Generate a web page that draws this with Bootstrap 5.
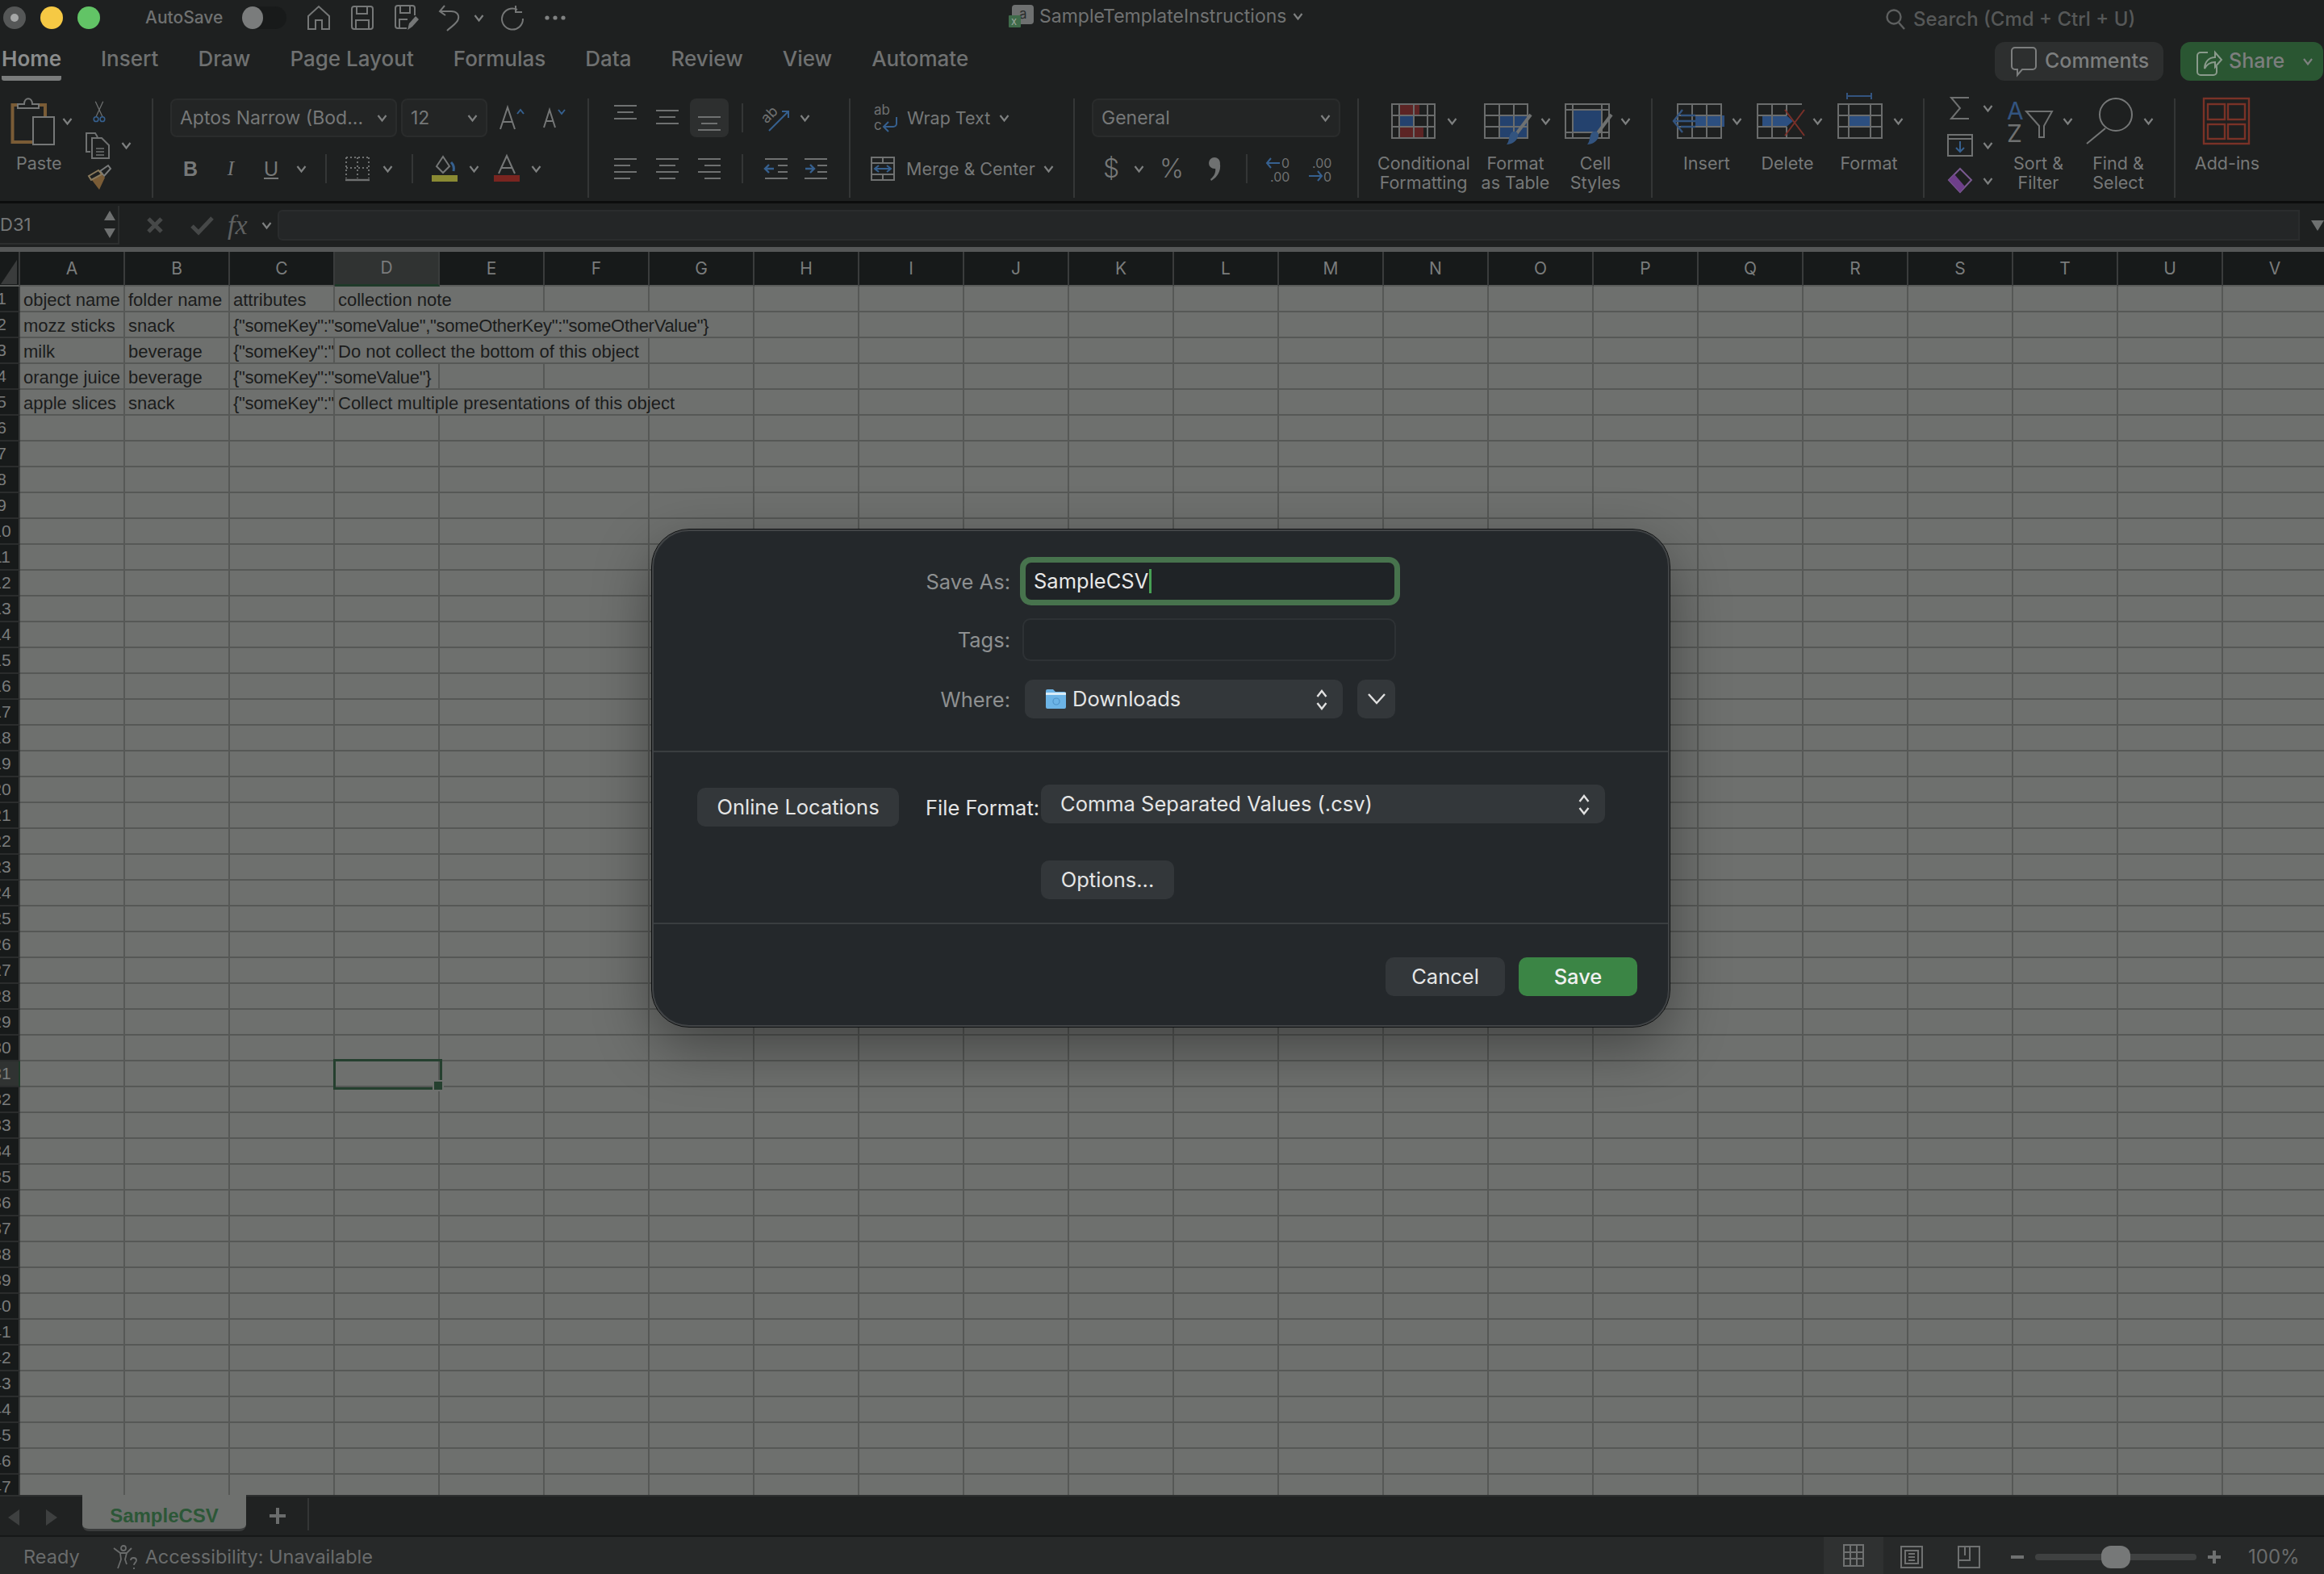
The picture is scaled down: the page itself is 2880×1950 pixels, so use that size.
<!DOCTYPE html>
<html lang="en">
<head>
<meta charset="UTF-8">
<title>SampleTemplateInstructions</title>
<link href="https://cdn.jsdelivr.net/npm/bootstrap@5.3.0/dist/css/bootstrap.min.css" rel="stylesheet">
<style>
    html, body { height: 100%; overflow: hidden; }
    body { background: #1e2020; font-family: Inter, "Noto Sans", sans-serif; color: #767878; font-size: 22px; }
    svg { display: block; flex: none; overflow: visible; }
    .xl-window { position: relative; width: 2880px; height: 1950px; display: flex; flex-direction: column; overflow: hidden; }

    /* small margin helpers, bootstrap spacing scale is too coarse here */
    .l2 { margin-left: 2px; } .l5 { margin-left: 5px; } .l9 { margin-left: 9px; } .l10 { margin-left: 10px; } .l11 { margin-left: 11px; } .l12 { margin-left: 12px; }
    .l13 { margin-left: 13px; } .l14 { margin-left: 14px; } .l15 { margin-left: 15px; } .l16 { margin-left: 16px; } .l18 { margin-left: 18px; }
    .l20 { margin-left: 20px; } .l21 { margin-left: 21px; } .l22 { margin-left: 22px; } .l23 { margin-left: 23px; } .l24 { margin-left: 24px; }
    .l25 { margin-left: 25px; } .l26 { margin-left: 26px; } .l27 { margin-left: 27px; } .l29 { margin-left: 29px; } .l34 { margin-left: 34px; } .l38 { margin-left: 38px; } .l43 { margin-left: 43px; }

    /* title bar */
    .title-bar { height: 44px; flex: none; display: flex; align-items: center; position: relative; padding-left: 4px; }
    .light { width: 28px; height: 28px; border-radius: 50%; margin-right: 18px; flex: none; }
    .light-grey { background: #555757; display: flex; align-items: center; justify-content: center; }
    .light-grey::after { content: ""; width: 10px; height: 10px; border-radius: 50%; background: #a5a7a7; }
    .light-yellow { background: #f6c944; }
    .light-green { background: #62c466; }
    .autosave { margin-left: 38px; width: 120px; font-size: 21px; font-weight: 500; color: #6f7171; }
    .toggle-pill { width: 55px; height: 28px; border-radius: 14px; background: #181a1a; flex: none; }
    .toggle-pill::before { content: ""; display: block; width: 26px; height: 28px; border-radius: 50%; background: #7a7c7c; }
    .doc-title { position: absolute; left: 1250px; top: 0; height: 40px; display: flex; align-items: center; gap: 7px; font-size: 23px; color: #707272; }
    .search-hint { position: absolute; left: 2337px; top: 6px; height: 36px; display: flex; align-items: center; gap: 9px; font-size: 24px; font-weight: 500; color: #565858; }

    /* tab row */
    .tab-row { height: 66px; flex: none; display: flex; align-items: flex-start; justify-content: space-between; padding: 8px 1px 0 2px; }
    .xl-tabs { gap: 49px; flex-wrap: nowrap; }
    .xl-tabs .nav-link { padding: 0; height: 42px; line-height: 42px; font-size: 26px; font-weight: 500; color: #6f7171; }
    .xl-tabs .nav-link.active { color: #8a8c8c; font-weight: 600; border-bottom: 6px solid #7a7c7c; height: 48px; border-radius: 3px; }
    .top-btn { height: 48px; border-radius: 12px; display: flex; align-items: center; font-size: 25px; font-weight: 500; color: #7c7e7e; border: 0; padding: 0; }
    .btn-comments { width: 209px; background: #2d2f2f; gap: 10px; padding-left: 20px; margin-right: 21px; }
    .btn-share { width: 177px; background: #2a5632; gap: 8px; padding-left: 20px; }

    /* ribbon */
    .ribbon { height: 142px; flex: none; display: flex; padding-top: 12px; border-bottom: 3px solid #0c0d0d; }
    .rb-group { height: 123px; flex: none; border-right: 2px solid #343636; box-sizing: border-box; }
    .g-clip { width: 190px; display: flex; padding-left: 14px; }
    .g-font { width: 540px; padding-left: 21px; }
    .g-align { width: 324px; padding-left: 31px; }
    .g-wrap { width: 278px; padding-left: 25px; }
    .g-num { width: 352px; padding-left: 21px; }
    .g-styles { width: 364px; padding-left: 23px; display: flex; }
    .g-cells { width: 337px; padding-left: 17px; display: flex; }
    .g-edit { width: 311px; padding-left: 28px; display: flex; }
    .g-add { width: 185px; padding-left: 20px; border-right: 0; display: flex; }
    .rb-row1 { height: 48px; display: flex; align-items: center; }
    .rb-row2 { height: 44px; margin-top: 17px; display: flex; align-items: center; }
    .rb-sep { width: 2px; height: 36px; background: #343636; flex: none; }
    .rb-box { height: 48px; border-radius: 8px; background: #232525; border: 2px solid #2a2c2c; display: flex; align-items: center; justify-content: space-between; padding: 0 10px 0 10px; font-size: 23px; color: #767878; box-sizing: border-box; flex: none; }
    .box-fontname { width: 281px; white-space: nowrap; }
    .box-size { width: 107px; }
    .box-general { width: 308px; }
    .align-top-a { align-self: flex-start; margin-top: 8px; }
    .align-top-b { align-self: flex-start; margin-top: 14px; }
    .align-on { width: 48px; height: 48px; border-radius: 8px; background: #2d2f2f; display: flex; justify-content: center; padding-top: 22px; flex: none; }
    .fmt-b, .fmt-i, .fmt-u { display: block; width: 14px; font-size: 25px; line-height: 30px; color: #767878; font-family: "Liberation Sans", sans-serif; text-align: center; flex: none; }
    .fmt-b { font-weight: 700; }
    .fmt-i { font-family: "Liberation Serif", serif; font-style: italic; }
    .fmt-u { width: 18px; text-decoration: underline; }
    .num-dollar { width: 18px; font-size: 32px; font-weight: 300; line-height: 36px; text-align: center; flex: none; }
    .num-pct { width: 32px; font-size: 32px; font-weight: 300; line-height: 36px; text-align: center; flex: none; }
    .rb-big { display: flex; flex-direction: column; flex: none; }
    .rb-big-top { height: 68px; padding-bottom: 12px; box-sizing: border-box; display: flex; align-items: center; }
    .rb-label { font-size: 21.5px; line-height: 24px; text-align: center; color: #767878; white-space: nowrap; }
    .w-cond { width: 114px; } .w-table { width: 114px; } .w-cell { width: 84px; }
    .w-ins { width: 100px; } .w-del { width: 100px; } .w-fmt { width: 102px; }
    .w-sort { width: 90px; } .w-find { width: 108px; } .w-add { width: 88px; } .w-paste { width: 90px; }
    .pl4 { padding-left: 4px; } .pl6 { padding-left: 6px; } .pl8 { padding-left: 8px; } .pl12 { padding-left: 12px; }
    .pl14 { padding-left: 14px; } .pl17 { padding-left: 17px; } .pl18 { padding-left: 18px; }
    .clip-side { width: 70px; margin-left: 2px; position: relative; }
    .clip-row { display: flex; align-items: center; }
    .edit-col { width: 68px; flex: none; display: flex; flex-direction: column; }
    .edit-a { height: 32px; margin-top: -4px; } .edit-b { height: 28px; margin-top: 16px; } .edit-c { height: 30px; margin-top: 15px; }

    /* formula bar */
    .formula-bar { height: 54px; flex: none; display: flex; align-items: center; }
    .name-box { width: 148px; height: 48px; flex: none; border-right: 2px solid #2c2e2e; border-bottom: 2px solid #2c2e2e; display: flex; align-items: center; justify-content: space-between; padding: 0 2px 0 0; font-size: 22px; color: #767878; }
    .fx-text { font-family: "Liberation Serif", serif; font-style: italic; font-size: 34px; color: #5e6060; width: 32px; line-height: 34px; flex: none; }
    .formula-input { flex: 1 1 auto; height: 38px; background: #242627; border: 2px solid #2a2c2d; border-radius: 6px 0 0 6px; margin-left: 7px; }
    .formula-end { width: 30px; height: 38px; flex: none; display: flex; align-items: center; justify-content: flex-end; background: #1e2020; }

    /* sheet */
    .sheet-top-line { height: 6px; flex: none; background: #555757; }
    .sheet { flex: 1 1 auto; min-height: 0; overflow: hidden; background: #6e706e; }
    .xl-grid { border-collapse: separate; border-spacing: 0; table-layout: fixed; width: 2885px; font-family: "Liberation Sans", sans-serif; font-size: 22px; color: #1b1c1c; }
    .xl-grid th, .xl-grid td { padding: 0; box-sizing: border-box; white-space: nowrap; overflow: hidden; }
    .xl-grid col.col-row { width: 25px; }
    .xl-grid col.col-cell { width: 130px; }
    .xl-grid thead th { height: 43px; background: #171a1a; color: #7a7c7c; font-weight: 400; text-align: center; border-right: 2px solid #3a3c3c; border-bottom: 2px solid #5a5c5a; font-family: Inter, sans-serif; font-size: 21px; }
    .xl-grid thead th.head-on { background: #303332; border-bottom: 3px solid #1f3a29; }
    .xl-grid tbody th { height: 32px; background: #171a1a; color: #7a7c7c; font-weight: 400; border-right: 2px solid #3a3c3c; border-bottom: 2px solid #2a2c2c; overflow: hidden; }
    .xl-grid tbody th.head-on { background: #303332; border-right: 2px solid #1f3a29; }
    .row-num { display: block; width: 46px; margin-left: -21px; text-align: center; font-size: 21px; line-height: 30px; }
    .xl-grid td { height: 32px; border-right: 2px solid #565856; border-bottom: 2px solid #565856; padding: 3px 0 0 4px; line-height: 27px; vertical-align: bottom; }
    .json-cell { letter-spacing: -.3px; }
    .xl-grid td.cur-cell { overflow: visible; position: relative; }
    .cur-cell::after { content: ""; position: absolute; left: -2px; top: -3px; width: 135px; height: 38px; border: 3px solid #25402f; }
    .cur-cell::before { content: ""; position: absolute; right: -5px; bottom: -5px; width: 10px; height: 10px; background: #25402f; outline: 2px solid #6e706e; z-index: 1; }
    .corner-mark { width: 0; height: 0; border-style: solid; border-width: 0 0 30px 20px; border-color: transparent transparent #3a3c3c transparent; margin: 8px 0 0 1px; }

    /* sheet tabs + status */
    .sheet-tabs { height: 52px; flex: none; background: #202222; border-top: 2px solid #2d2f2f; border-bottom: 2px solid #161818; display: flex; align-items: flex-start; box-sizing: border-box; }
    .tab-nav { width: 102px; flex: none; display: flex; gap: 31px; padding: 16px 0 0 9px; }
    .sheet-tab { width: 203px; height: 45px; flex: none; margin-top: -2px; background: #6e706e; border-bottom: 3px solid #3a3c3c; border-radius: 0 0 8px 8px; text-align: center; font-family: "Liberation Sans", sans-serif; font-size: 24px; font-weight: 700; line-height: 52px; color: #2c5737; }
    .tab-plus { margin: 14px 0 0 29px; }
    .tab-sep { width: 2px; height: 40px; margin: 2px 0 0 27px; background: #343636; }
    .status-bar { height: 46px; flex: none; background: #272929; display: flex; align-items: center; padding: 3px 0 0 29px; font-size: 23.5px; color: #6a6c6c; position: relative; }
    .status-acc { display: flex; align-items: center; gap: 10px; margin-left: 41px; }
    .status-right { position: absolute; left: 2260px; top: 0; height: 46px; padding-top: 4px; display: flex; align-items: center; font-size: 24px; }
    .view-on { width: 74px; height: 46px; margin-top: -4px; background: #2f3131; display: flex; align-items: center; justify-content: center; flex: none; }
    .zoom-track { width: 200px; height: 8px; border-radius: 4px; background: #3f4141; position: relative; flex: none; margin-left: 14px; }
    .zoom-thumb { position: absolute; left: 82px; top: -10px; width: 36px; height: 28px; border-radius: 12px; background: #767878; }
    .zoom-pct { margin-left: 34px; }

    /* save sheet */
    .save-sheet { position: absolute; left: 808px; top: 656px; width: 1261px; height: 616px; background: #24282b; border-radius: 46px; border: 2px solid #414446; outline: 1px solid #0e1011; box-shadow: 0 24px 70px rgba(0,0,0,.4); padding-top: 32px; font-size: 25.5px; }
    .dlg-form { display: grid; grid-template-columns: 442px 1fr; column-gap: 12px; align-items: center; }
    .dlg-label { text-align: right; color: #8e9091; white-space: nowrap; padding-top: 2px; }
    .save-name { width: 471px; height: 60px; border: 7px solid #47734d; border-radius: 14px; background: #1f2326; display: flex; align-items: center; padding-left: 10px; color: #e8e8e8; }
    .caret-bar { width: 3px; height: 30px; background: #47a054; margin-left: 1px; }
    .tags-box { width: 463px; height: 53px; margin: 16px 0 0 3px; border: 2px solid #2e3235; border-radius: 10px; background: #222629; }
    .dlg-tags-label { margin-top: 16px; }
    .where-row { display: flex; gap: 18px; margin: 23px 0 0 6px; }
    .dlg-where-label { margin-top: 23px; }
    .dlg-btn { height: 48px; border-radius: 10px; border: 0; background: #33373a; color: #e4e5e5; font-size: 25.5px; line-height: 48px; padding: 0; display: flex; align-items: center; justify-content: center; flex: none; }
    .dlg-btn:hover { background: #33373a; color: #e4e5e5; }
    .where-pop { width: 394px; justify-content: flex-start; padding-left: 25px; gap: 7px; position: relative; }
    .pop-arrows { position: absolute; right: 18px; top: 11px; }
    .where-more { width: 47px; }
    .dlg-rule { height: 2px; background: #3a3e40; border: 0; opacity: 1; margin: 0; }
    .rule-a { margin-top: 40px; }
    .format-row { display: flex; padding: 40px 0 0 54px; }
    .online-btn { width: 250px; margin-top: 4px; }
    .format-label { margin: 4px 0 0 33px; width: 143px; line-height: 50px; white-space: nowrap; color: #e4e5e5; }
    .format-pop { width: 699px; justify-content: flex-start; padding-left: 24px; position: relative; }
    .options-row { padding: 40px 0 29px 480px; }
    .options-btn { width: 165px; }
    .action-row { display: flex; justify-content: flex-end; gap: 17px; padding: 41px 38px 0 0; }
    .cancel-btn { width: 148px; }
    .save-btn { width: 147px; background: #3b8545; color: #f0f0f0; font-weight: 500; }
    .save-btn:hover { background: #3b8545; color: #f0f0f0; }
</style>
</head>
<body>

<svg width="0" height="0" class="position-absolute">
    <symbol id="chev" viewBox="0 0 13 12"><polyline points="1.5,3 6.5,9.5 11.5,3" fill="none" stroke="#7e8080" stroke-width="2.2"/></symbol>
    <symbol id="updown" viewBox="0 0 16 28"><polyline points="2.5,10 8,3 13.5,10" fill="none" stroke="#e0e0e0" stroke-width="2.4"/><polyline points="2.5,18 8,25 13.5,18" fill="none" stroke="#e0e0e0" stroke-width="2.4"/></symbol>
</svg>

<div class="xl-window">

    <!-- title bar -->
    <div class="title-bar">
        <span class="light light-grey"></span><span class="light light-yellow"></span><span class="light light-green"></span>
        <span class="autosave">AutoSave</span>
        <span class="toggle-pill"></span>
        <svg class="l26" width="28" height="30" viewBox="0 0 28 30" fill="none" stroke="#757777" stroke-width="2"><path d="M1 13 14 1l13 12v16H18V18h-8v11H1z"/></svg>
        <svg class="l26" width="28" height="30" viewBox="0 0 28 30" fill="none" stroke="#757777" stroke-width="2"><rect x="1" y="1" width="26" height="28" rx="3"/><path d="M7 1v9h13V1M6 29V18h16v11"/></svg>
        <svg class="l26" width="30" height="32" viewBox="0 0 30 32" fill="none" stroke="#757777" stroke-width="2"><path d="M15 29H4a3 3 0 0 1-3-3V4a3 3 0 0 1 3-3h18a3 3 0 0 1 3 3v9"/><path d="M7 1v9h12V1M6 29V18h10"/><path d="M16 31l2-8 8-9 4 4-8 9z" fill="#757777" stroke="none"/></svg>
        <svg class="l24" width="28" height="32" viewBox="0 0 28 32" fill="none" stroke="#757777" stroke-width="2"><path d="M8 1 2 8l7 5M2 8h14c7 0 10 4 9 9-1 6-8 9-14 15"/></svg>
        <svg class="l16" width="13" height="12"><use href="#chev"/></svg>
        <svg class="l21" width="28" height="30" viewBox="0 0 28 30" fill="none" stroke="#757777" stroke-width="2"><path d="M20 5A13 13 0 1 0 27 16"/><path d="M18 0v8h8"/></svg>
        <svg class="l26" width="26" height="6" viewBox="0 0 26 6" fill="#808282"><circle cx="3" cy="3" r="2.6"/><circle cx="13" cy="3" r="2.6"/><circle cx="23" cy="3" r="2.6"/></svg>

        <div class="doc-title">
            <svg width="31" height="28" viewBox="0 0 31 28"><rect x="4" y="0" width="27" height="24" rx="4" fill="#6e7070"/><text x="13" y="17" font-family="Inter" font-size="17" fill="#2a2c2c">a</text><rect x="0" y="13" width="15" height="15" rx="1" fill="#3f6b4a"/><text x="3" y="25" font-family="Inter" font-size="13" fill="#9aa59c">x</text></svg>
            <span>SampleTemplateInstructions</span>
            <svg width="15" height="12"><use href="#chev"/></svg>
        </div>
        <div class="search-hint">
            <svg width="25" height="26" viewBox="0 0 25 26" fill="none" stroke="#5e6060" stroke-width="2.4"><circle cx="10" cy="10" r="8.5"/><path d="M16 17l7 8"/></svg>
            <span>Search (Cmd + Ctrl + U)</span>
        </div>
    </div>

    <!-- tabs -->
    <div class="tab-row">
        <ul class="nav xl-tabs">
            <li class="nav-item"><a class="nav-link active" href="#">Home</a></li>
            <li class="nav-item"><a class="nav-link" href="#">Insert</a></li>
            <li class="nav-item"><a class="nav-link" href="#">Draw</a></li>
            <li class="nav-item"><a class="nav-link" href="#">Page Layout</a></li>
            <li class="nav-item"><a class="nav-link" href="#">Formulas</a></li>
            <li class="nav-item"><a class="nav-link" href="#">Data</a></li>
            <li class="nav-item"><a class="nav-link" href="#">Review</a></li>
            <li class="nav-item"><a class="nav-link" href="#">View</a></li>
            <li class="nav-item"><a class="nav-link" href="#">Automate</a></li>
        </ul>
        <div class="d-flex">
            <button class="btn top-btn btn-comments">
                <svg width="32" height="36" viewBox="0 0 32 36" fill="none" stroke="#7c7e7e" stroke-width="2"><path d="M5 1h22a4 4 0 0 1 4 4v19a4 4 0 0 1-4 4H14l-6 7v-7H5a4 4 0 0 1-4-4V5a4 4 0 0 1 4-4z"/></svg>
                <span>Comments</span>
            </button>
            <button class="btn top-btn btn-share">
                <svg width="32" height="36" viewBox="0 0 32 36" fill="none" stroke="#8a9a8c" stroke-width="2"><path d="M14 7H5a4 4 0 0 0-4 4v20a4 4 0 0 0 4 4h16a4 4 0 0 0 4-4v-7"/><path d="M10 27c0-9 6-14 13-14V7l8 9-8 9v-6c-6 0-10 2-13 8z"/></svg>
                <span>Share</span>
                <svg class="l14" width="14" height="12"><use href="#chev"/></svg>
            </button>
        </div>
    </div>

    <!-- ribbon -->
    <div class="ribbon">
        <!-- clipboard -->
        <div class="rb-group g-clip">
            <div class="rb-big w-paste">
                <div class="rb-big-top">
                    <svg width="54" height="60" viewBox="0 0 54 60" fill="none"><path d="M8 10H1.5v46H26" stroke="#7a5c36" stroke-width="4"/><path d="M34 10h8v14" stroke="#7a5c36" stroke-width="4"/><path d="M8 14V9h8c0-9 10-9 10 0h8v5z" stroke="#757777" stroke-width="2" fill="#1e2020"/><rect x="27" y="25" width="26" height="34" stroke="#757777" stroke-width="2" fill="#1e2020"/></svg>
                    <svg class="l9" width="13" height="12"><use href="#chev"/></svg>
                </div>
                <div class="rb-label text-start pl6">Paste</div>
            </div>
            <div class="clip-side">
                <svg class="pl6" width="28" height="34" viewBox="-6 0 28 34" fill="none"><path d="M3 24 14 0M13 24 2 0" stroke="#6f7171" stroke-width="1.6"/><circle cx="3" cy="28" r="3.6" stroke="#36608f" stroke-width="2"/><circle cx="13" cy="28" r="3.6" stroke="#36608f" stroke-width="2"/></svg>
                <div class="clip-row mt-2">
                    <svg width="32" height="32" viewBox="0 0 32 32" fill="none" stroke="#6f7171" stroke-width="2"><path d="M6 24H1V1h11l3 5"/><path d="M8 7h12l9 9v16H8z" fill="#1e2020"/><path d="M13 20h10M13 24h10M13 28h10" stroke-width="1.4"/></svg>
                    <svg class="l12" width="13" height="12"><use href="#chev"/></svg>
                </div>
                <svg class="mt-2" width="32" height="32" viewBox="0 0 32 32"><path d="M18 8 28 1l3 4-8 9z" fill="none" stroke="#7a7c7c" stroke-width="2"/><path d="M4 14 16 7l8 9-7 15z" fill="#7a5c36"/><path d="M4 14 16 7l4 5-13 7z" fill="#1e2020" stroke="#8a7a5c" stroke-width="2"/></svg>
            </div>
        </div>

        <!-- font -->
        <div class="rb-group g-font">
            <div class="rb-row1">
                <div class="rb-box box-fontname"><span>Aptos Narrow (Bod...</span><svg width="13" height="12"><use href="#chev"/></svg></div>
                <div class="rb-box box-size l5"><span>12</span><svg width="13" height="12"><use href="#chev"/></svg></div>
                <svg class="l15" width="30" height="28" viewBox="0 0 30 28" fill="none" stroke-width="2"><path d="M1 28 10 1l9 27M4 19h12" stroke="#757777"/><path d="M22 9l4-5 4 5" stroke="#36608f"/></svg>
                <svg class="l24" width="28" height="24" viewBox="0 0 28 24" fill="none" stroke-width="2"><path d="M1 24 8 2l7 22M3.5 16h9" stroke="#757777"/><path d="M19 2l4 5 4-5" stroke="#36608f"/></svg>
            </div>
            <div class="rb-row2">
                <span class="fmt-b l16">B</span>
                <span class="fmt-i l38">I</span>
                <span class="fmt-u l34">U</span>
                <svg class="l22" width="13" height="12"><use href="#chev"/></svg>
                <span class="rb-sep l23"></span>
                <svg class="l23" width="30" height="30" viewBox="0 0 30 30" fill="none" stroke="#6f7171" stroke-width="2"><path d="M1 1h28M1 1v26M29 1v26M15 1v26M1 14h28" stroke-dasharray="2 3"/><path d="M0 29h30" stroke-width="2.4"/></svg>
                <svg class="l16" width="13" height="12"><use href="#chev"/></svg>
                <span class="rb-sep l23"></span>
                <svg class="l23" width="32" height="32" viewBox="0 0 32 32" fill="none"><path d="M14 1 6 13l8 8 8-8z" stroke="#757777" stroke-width="2"/><path d="M24 8c3 3 4 7 3 11" stroke="#36608f" stroke-width="3"/><rect y="24" width="32" height="8" fill="#8a8a33"/></svg>
                <svg class="l14" width="13" height="12"><use href="#chev"/></svg>
                <svg class="l18" width="32" height="32" viewBox="0 0 32 32" fill="none"><path d="M6 22 16 0l10 22M9 15h14" stroke="#757777" stroke-width="2"/><rect y="24" width="32" height="8" fill="#7a2520"/></svg>
                <svg class="l14" width="13" height="12"><use href="#chev"/></svg>
            </div>
        </div>

        <!-- alignment -->
        <div class="rb-group g-align">
            <div class="rb-row1">
                <svg class="align-top-a" width="28" height="18" viewBox="0 0 28 18" stroke="#6f7171" stroke-width="2"><path d="M0 1h28M4 9h20M0 17h28"/></svg>
                <svg class="l24 align-top-b" width="28" height="18" viewBox="0 0 28 18" stroke="#6f7171" stroke-width="2"><path d="M0 1h28M4 9h20M0 17h28"/></svg>
                <span class="align-on l14"><svg width="28" height="18" viewBox="0 0 28 18" stroke="#6f7171" stroke-width="2"><path d="M0 1h28M4 9h20M0 17h28"/></svg></span>
                <span class="rb-sep l16"></span>
                <svg class="l24" width="32" height="32" viewBox="0 0 32 32" fill="none"><text transform="rotate(-45 10 16)" x="1" y="18" font-family="Inter" font-size="18" fill="#6f7171">ab</text><path d="M8 32 32 8M24 8h8v8" stroke="#36608f" stroke-width="2"/></svg>
                <svg class="l14" width="13" height="12"><use href="#chev"/></svg>
            </div>
            <div class="rb-row2">
                <svg width="28" height="26" viewBox="0 0 28 26" stroke="#6f7171" stroke-width="2"><path d="M0 1h28M0 9h20M0 17h28M0 25h20"/></svg>
                <svg class="l24" width="28" height="26" viewBox="0 0 28 26" stroke="#6f7171" stroke-width="2"><path d="M0 1h28M4 9h20M0 17h28M4 25h20"/></svg>
                <svg class="l24" width="28" height="26" viewBox="0 0 28 26" stroke="#6f7171" stroke-width="2"><path d="M0 1h28M8 9h20M0 17h28M8 25h20"/></svg>
                <span class="rb-sep l26"></span>
                <svg class="l25" width="30" height="26" viewBox="0 0 30 26" fill="none" stroke-width="2"><path d="M2 1h28M18 9h12M18 17h12M2 25h28" stroke="#6f7171"/><path d="M13 13H2M7 8l-5 5 5 5" stroke="#36608f" stroke-width="2.4"/></svg>
                <svg class="l21" width="30" height="26" viewBox="0 0 30 26" fill="none" stroke-width="2"><path d="M0 1h28M16 9h12M16 17h12M0 25h28" stroke="#6f7171"/><path d="M1 13h11M7 8l5 5-5 5" stroke="#36608f" stroke-width="2.4"/></svg>
            </div>
        </div>

        <!-- wrap + merge -->
        <div class="rb-group g-wrap">
            <div class="rb-row1">
                <svg class="l2" width="32" height="36" viewBox="0 0 32 36" fill="none"><text x="2" y="14" font-family="Inter" font-size="17" fill="#6f7171">ab</text><text x="2" y="33" font-family="Inter" font-size="17" fill="#6f7171">c</text><path d="M30 17v8a4 4 0 0 1-4 4H15M20 23l-6 6 6 6" stroke="#36608f" stroke-width="2"/></svg>
                <span class="rb-label l11">Wrap Text</span>
                <svg class="l11" width="13" height="12"><use href="#chev"/></svg>
            </div>
            <div class="rb-row2">
                <svg width="30" height="30" viewBox="0 0 30 30" fill="none"><path d="M1 1h28v28H1zM1 8h28M1 22h28M15 1v7M15 22v7" stroke="#6f7171" stroke-width="2"/><path d="M5 15h20M10 11l-5 4 5 4M20 11l5 4-5 4" stroke="#36608f" stroke-width="2"/></svg>
                <span class="rb-label l14">Merge &amp; Center</span>
                <svg class="l10" width="13" height="12"><use href="#chev"/></svg>
            </div>
        </div>

        <!-- number -->
        <div class="rb-group g-num">
            <div class="rb-row1">
                <div class="rb-box box-general"><span>General</span><svg width="13" height="12"><use href="#chev"/></svg></div>
            </div>
            <div class="rb-row2">
                <span class="num-dollar l14">$</span>
                <svg class="l20" width="13" height="12"><use href="#chev"/></svg>
                <span class="num-pct l18">%</span>
                <svg class="l27" width="20" height="30" viewBox="0 0 20 30" fill="#6f7171"><circle cx="10" cy="8" r="7"/><path d="M17 9c1 9-3 16-11 21l-1-2c5-4 7-9 6-14z"/></svg>
                <span class="rb-sep l29"></span>
                <svg class="l22" width="32" height="32" viewBox="0 0 32 32" fill="none"><path d="M18 9H2M7 3 2 9l5 6" stroke="#36608f" stroke-width="2"/><text x="20" y="15" font-family="Inter" font-size="16" fill="#6f7171">0</text><text x="6" y="32" font-family="Inter" font-size="16" fill="#6f7171">.00</text></svg>
                <svg class="l20" width="32" height="32" viewBox="0 0 32 32" fill="none"><text x="6" y="15" font-family="Inter" font-size="16" fill="#6f7171">.00</text><path d="M2 25h16M13 19l5 6-5 6" stroke="#36608f" stroke-width="2"/><text x="20" y="32" font-family="Inter" font-size="16" fill="#6f7171">0</text></svg>
            </div>
        </div>

        <!-- styles -->
        <div class="rb-group g-styles">
            <div class="rb-big w-cond">
                <div class="rb-big-top pl17">
                    <svg width="55" height="44" viewBox="0 0 55 44" fill="none"><rect x="10" y="1" width="25" height="14" fill="#5c2424"/><rect x="10" y="15" width="18" height="14" fill="#24426e"/><rect x="10" y="29" width="30" height="14" fill="#5c2424"/><path d="M1 1h53v42H1zM1 15h53M1 29h53M10 1v42M28 1v42M45 1v42" stroke="#6a6c6c" stroke-width="2"/></svg>
                    <svg class="l14" width="13" height="12"><use href="#chev"/></svg>
                </div>
                <div class="rb-label">Conditional<br>Formatting</div>
            </div>
            <div class="rb-big w-table">
                <div class="rb-big-top pl18">
                    <svg width="60" height="44" viewBox="0 0 60 44" fill="none"><rect x="19" y="15" width="36" height="28" fill="#24426e"/><path d="M1 1h53v42H1zM1 15h53M1 29h53M19 1v42M37 1v42" stroke="#6a6c6c" stroke-width="2"/><path d="M58 14 40 38" stroke="#6f7171" stroke-width="4"/><path d="M34 36c5-3 9 0 8 5-1 6-8 10-14 10 4-4 2-11 6-15z" fill="#33547f"/></svg>
                    <svg class="l10" width="13" height="12"><use href="#chev"/></svg>
                </div>
                <div class="rb-label">Format<br>as Table</div>
            </div>
            <div class="rb-big w-cell">
                <div class="rb-big-top pl4">
                    <svg width="58" height="44" viewBox="0 0 58 44" fill="none"><rect x="10" y="8" width="36" height="28" fill="#24426e"/><path d="M1 1h54v42H1zM1 8h54M1 36h54M10 1v42M46 1v42" stroke="#6a6c6c" stroke-width="2"/><path d="M58 14 40 38" stroke="#6f7171" stroke-width="4"/><path d="M34 36c5-3 9 0 8 5-1 6-8 10-14 10 4-4 2-11 6-15z" fill="#33547f"/></svg>
                    <svg class="l11" width="13" height="12"><use href="#chev"/></svg>
                </div>
                <div class="rb-label">Cell<br>Styles</div>
            </div>
        </div>

        <!-- cells -->
        <div class="rb-group g-cells">
            <div class="rb-big w-ins">
                <div class="rb-big-top pl8">
                    <svg width="64" height="44" viewBox="0 0 64 44" fill="none"><rect x="28" y="15" width="36" height="14" fill="#2c4f80"/><path d="M6 1h54v42H6zM6 15h54M6 29h54M24 1v42M42 1v42" stroke="#6a6c6c" stroke-width="2"/><path d="M28 22H2M12 8 1 22l11 14M28 15H10M28 29H10" stroke="#33547f" stroke-width="2.4"/></svg>
                    <svg class="l9" width="13" height="12"><use href="#chev"/></svg>
                </div>
                <div class="rb-label">Insert</div>
            </div>
            <div class="rb-big w-del">
                <div class="rb-big-top pl12">
                    <svg width="59" height="44" viewBox="0 0 59 44" fill="none"><rect x="7" y="15" width="30" height="14" fill="#2c4f80"/><path d="M37 15l8 7-8 7z" fill="#2c4f80"/><path d="M56 1H1v42h55M1 15h36M1 29h36M19 1v42M37 1v14M37 29v14" stroke="#6a6c6c" stroke-width="2"/><path d="M35 8l24 32M59 8 35 40" stroke="#7a3029" stroke-width="2"/></svg>
                    <svg class="l10" width="13" height="12"><use href="#chev"/></svg>
                </div>
                <div class="rb-label">Delete</div>
            </div>
            <div class="rb-big w-fmt">
                <div class="rb-big-top pl12">
                    <svg width="56" height="44" viewBox="0 0 56 44" fill="none"><path d="M12 -9h30M12 -13v8M42 -13v8" stroke="#33547f" stroke-width="2"/><rect x="14" y="15" width="27" height="14" fill="#2c4f80"/><path d="M1 1h54v42H1zM1 15h54M1 29h54M14 1v42M41 1v42" stroke="#6a6c6c" stroke-width="2"/></svg>
                    <svg class="l13" width="13" height="12"><use href="#chev"/></svg>
                </div>
                <div class="rb-label">Format</div>
            </div>
        </div>

        <!-- editing -->
        <div class="rb-group g-edit">
            <div class="edit-col">
                <div class="clip-row edit-a">
                    <svg width="32" height="28" viewBox="0 0 32 28" fill="none" stroke="#6f7171" stroke-width="2"><path d="M27 1H5l11 13L5 27h22"/></svg>
                    <svg class="l12" width="13" height="12"><use href="#chev"/></svg>
                </div>
                <div class="clip-row edit-b">
                    <svg width="32" height="28" viewBox="0 0 32 28" fill="none"><path d="M1 1h30v26H1zM1 6h30" stroke="#6f7171" stroke-width="2"/><path d="M16 9v13M11 17l5 5 5-5" stroke="#36608f" stroke-width="2"/></svg>
                    <svg class="l12" width="13" height="12"><use href="#chev"/></svg>
                </div>
                <div class="clip-row edit-c">
                    <svg width="32" height="30" viewBox="0 0 32 30"><path d="M16 0 30 14 16 29 2 14z" fill="none" stroke="#7a5a90" stroke-width="2"/><path d="M2 14l7-7 13 15-6 7z" fill="#6e3f8a"/></svg>
                    <svg class="l12" width="13" height="12"><use href="#chev"/></svg>
                </div>
            </div>
            <div class="rb-big w-sort">
                <div class="rb-big-top pl6">
                    <svg width="56" height="52" viewBox="0 0 56 52" fill="none"><text x="0" y="24" font-family="Inter" font-size="30" fill="#33547f">A</text><text x="0" y="52" font-family="Inter" font-size="30" fill="#6f7171">Z</text><path d="M24 14h32L46 32v14h-6V32z" stroke="#6f7171" stroke-width="2"/></svg>
                    <svg class="l13" width="13" height="12"><use href="#chev"/></svg>
                </div>
                <div class="rb-label">Sort &amp;<br>Filter</div>
            </div>
            <div class="rb-big w-find">
                <div class="rb-big-top pl14">
                    <svg width="58" height="58" viewBox="0 0 58 58" fill="none" stroke="#757777" stroke-width="2"><ellipse cx="37" cy="21" rx="20" ry="20"/><path d="M24 38 1 57"/></svg>
                    <svg class="l13" width="13" height="12"><use href="#chev"/></svg>
                </div>
                <div class="rb-label">Find &amp;<br>Select</div>
            </div>
        </div>

        <!-- add-ins -->
        <div class="rb-group g-add">
            <div class="rb-big w-add">
                <div class="rb-big-top pl14">
                    <svg width="58" height="58" viewBox="0 0 58 58" fill="none" stroke="#7a3227" stroke-width="2.4"><rect x="1" y="1" width="56" height="56"/><rect x="6" y="8" width="21" height="19"/><rect x="31" y="8" width="21" height="19"/><rect x="6" y="33" width="21" height="18"/><rect x="31" y="33" width="21" height="18"/></svg>
                </div>
                <div class="rb-label">Add-ins</div>
            </div>
        </div>
    </div>

    <!-- formula bar -->
    <div class="formula-bar">
        <div class="name-box">
            <span>D31</span>
            <svg width="16" height="36" viewBox="0 0 16 36" fill="#6e7070"><path d="M8 1l7 12H1zM8 35 1 23h14z"/></svg>
        </div>
        <svg class="l34" width="20" height="20" viewBox="0 0 20 20" stroke="#464848" stroke-width="5"><path d="M2 2l16 16M18 2 2 18"/></svg>
        <svg class="l34" width="28" height="22" viewBox="0 0 28 22" fill="none" stroke="#464848" stroke-width="5"><path d="M2 12l8 8L27 2"/></svg>
        <span class="fx-text l18">fx</span>
        <svg class="l10" width="13" height="12"><use href="#chev"/></svg>
        <div class="formula-input"></div>
        <div class="formula-end"><svg width="16" height="14" viewBox="0 0 16 14" fill="#6e7070"><path d="M0 1h16L8 14z"/></svg></div>
    </div>

    <div class="sheet-top-line"></div>

    <!-- sheet, rows are filled in below -->
    <div class="sheet">
        <table class="xl-grid">
            <colgroup id="gridCols"></colgroup>
            <thead><tr id="gridHead"></tr></thead>
            <tbody id="gridBody"></tbody>
        </table>
    </div>

    <!-- sheet tabs -->
    <div class="sheet-tabs">
        <div class="tab-nav">
            <svg width="16" height="20" viewBox="0 0 16 20" fill="#3e4040"><path d="M15 0v20L1 10z"/></svg>
            <svg width="16" height="20" viewBox="0 0 16 20" fill="#3e4040"><path d="M1 0v20l14-10z"/></svg>
        </div>
        <div class="sheet-tab">SampleCSV</div>
        <svg class="tab-plus" width="20" height="20" viewBox="0 0 20 20" stroke="#6a6c6c" stroke-width="4"><path d="M10 0v20M0 10h20"/></svg>
        <div class="tab-sep"></div>
    </div>

    <!-- status bar -->
    <div class="status-bar">
        <span>Ready</span>
        <div class="status-acc">
            <svg width="30" height="30" viewBox="0 0 30 30" fill="none" stroke="#6a6c6c" stroke-width="1.8"><circle cx="13" cy="4" r="3"/><path d="M1 4l8 6h8l6-6M9 10l1 8-4 11M17 10l-2 8 2 6"/><path d="M22 19c0-4 7-4 7 0 0 3-3 3-3 6M26 28v2"/></svg>
            <span>Accessibility: Unavailable</span>
        </div>
        <div class="status-right">
            <span class="view-on">
                <svg width="26" height="28" viewBox="0 0 26 28" fill="none" stroke="#6f7171" stroke-width="2"><rect x="1" y="1" width="24" height="26"/><path d="M9 1v26M17 1v26M1 10h24M1 18h24"/></svg>
            </span>
            <svg class="l21" width="28" height="28" viewBox="0 0 28 28" fill="none" stroke="#6f7171" stroke-width="2"><rect x="1" y="1" width="26" height="26"/><rect x="6" y="6" width="16" height="16"/><path d="M10 10h8M10 14h8M10 18h8"/></svg>
            <svg class="l43" width="28" height="28" viewBox="0 0 28 28" fill="none" stroke="#6f7171" stroke-width="2"><path d="M1 1h26v26H1zM1 18h14V1M9 1v11"/></svg>
            <svg class="l38" width="16" height="4" viewBox="0 0 16 4" fill="#6f7171"><rect width="16" height="4"/></svg>
            <div class="zoom-track"><div class="zoom-thumb"></div></div>
            <svg class="l14" width="16" height="16" viewBox="0 0 16 16" fill="#6f7171"><path d="M6 0h4v6h6v4h-6v6H6v-6H0V6h6z"/></svg>
            <span class="zoom-pct">100%</span>
        </div>
    </div>

    <!-- save sheet -->
    <div class="save-sheet">
        <div class="dlg-form">
            <label class="dlg-label">Save As:</label>
            <div class="save-name"><span>SampleCSV</span><span class="caret-bar"></span></div>
            <label class="dlg-label dlg-tags-label">Tags:</label>
            <div class="tags-box"></div>
            <label class="dlg-label dlg-where-label">Where:</label>
            <div class="where-row">
                <button class="btn dlg-btn where-pop">
                    <svg width="27" height="26" viewBox="0 0 27 26"><path d="M1 3a2 2 0 0 1 2-2h7l3 3h11a2 2 0 0 1 2 2v17a2 2 0 0 1-2 2H3a2 2 0 0 1-2-2z" fill="#6cb4e6"/><rect x="1" y="5" width="25" height="3" fill="#d8ecf8"/><circle cx="14" cy="16" r="4" fill="none" stroke="#4f93c8" stroke-width="1.2"/></svg>
                    <span>Downloads</span>
                    <svg class="pop-arrows" width="16" height="28"><use href="#updown"/></svg>
                </button>
                <button class="btn dlg-btn where-more">
                    <svg width="22" height="14" viewBox="0 0 22 14" fill="none" stroke="#e0e0e0" stroke-width="2.4"><path d="M1 1l10 11L21 1"/></svg>
                </button>
            </div>
        </div>

        <hr class="dlg-rule rule-a">

        <div class="format-row">
            <button class="btn dlg-btn online-btn">Online Locations</button>
            <span class="format-label">File Format:</span>
            <button class="btn dlg-btn format-pop">
                <span>Comma Separated Values (.csv)</span>
                <svg class="pop-arrows" width="16" height="28"><use href="#updown"/></svg>
            </button>
        </div>
        <div class="options-row">
            <button class="btn dlg-btn options-btn">Options...</button>
        </div>

        <hr class="dlg-rule">

        <div class="action-row">
            <button class="btn dlg-btn cancel-btn">Cancel</button>
            <button class="btn dlg-btn save-btn">Save</button>
        </div>
    </div>
</div>

<script>
    // sheet contents: [col letter index, text, colspan]
    const sheetRows = {
        1: [[0, 'object name'], [1, 'folder name'], [2, 'attributes'], [3, 'collection note', 2]],
        2: [[0, 'mozz sticks'], [1, 'snack'], [2, '{"someKey":"someValue","someOtherKey":"someOtherValue"}', 5]],
        3: [[0, 'milk'], [1, 'beverage'], [2, '{"someKey":"someValue"}'], [3, 'Do not collect the bottom of this object', 3]],
        4: [[0, 'orange juice'], [1, 'beverage'], [2, '{"someKey":"someValue"}', 2]],
        5: [[0, 'apple slices'], [1, 'snack'], [2, '{"someKey":"someValue"}'], [3, 'Collect multiple presentations of this object', 4]]
    };
    const colCount = 22;
    const rowCount = 47;
    const selectedCol = 3;
    const selectedRow = 31;

    // column sizes and header letters
    let colsHtml = '<col class="col-row">';
    let headHtml = '<th><div class="corner-mark"></div></th>';
    for (let c = 0; c < colCount; c++) {
        colsHtml += '<col class="col-cell">';
        const on = c === selectedCol ? ' class="head-on"' : '';
        headHtml += `<th${on}>${String.fromCharCode(65 + c)}</th>`;
    }
    document.getElementById('gridCols').innerHTML = colsHtml;
    document.getElementById('gridHead').innerHTML = headHtml;

    // body rows, cells that spill into neighbours use colspan
    let bodyHtml = '';
    for (let r = 1; r <= rowCount; r++) {
        const on = r === selectedRow ? ' class="head-on"' : '';
        let row = `<tr><th${on}><span class="row-num">${r}</span></th>`;
        const filled = sheetRows[r] || [];
        for (let c = 0; c < colCount; c++) {
            const cell = filled.find(f => f[0] === c);
            if (cell) {
                const span = cell[2] || 1;
                const json = cell[1].startsWith('{') ? ' class="json-cell"' : '';
                row += `<td colspan="${span}"${json}>${cell[1]}</td>`;
                c += span - 1;
            } else if (r === selectedRow && c === selectedCol) {
                row += '<td class="cur-cell"></td>';
            } else {
                row += '<td></td>';
            }
        }
        bodyHtml += row + '</tr>';
    }
    document.getElementById('gridBody').innerHTML = bodyHtml;
</script>
<script src="https://cdn.jsdelivr.net/npm/bootstrap@5.3.0/dist/js/bootstrap.bundle.min.js"></script>
</body>
</html>
